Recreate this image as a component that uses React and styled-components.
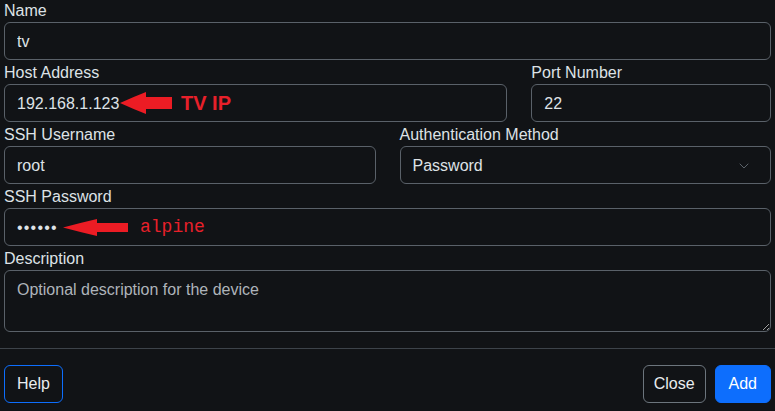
import React from 'react';
import styled, { createGlobalStyle } from 'styled-components';
import { ChevronDown } from 'lucide-react';

const GlobalStyle = createGlobalStyle`
    body {
        margin: 0;
        background: #111316;
        color: #dee2e6;
        font-family: "Segoe UI", "Liberation Sans", Arial, sans-serif;
        font-size: 16px;
    }
`;

const Form = styled.form`
    padding: 0 4px;
    margin-top: -2px;
`;

const Row = styled.div`
    display: flex;
    margin: 0 -12px;
`;

const Col = styled.div`
    flex: 0 0 ${p => (p.span / 12) * 100}%;
    padding: 0 12px;
    box-sizing: border-box;
    min-width: 0;
`;

const Label = styled.label`
    display: block;
    line-height: 26px;
    height: 24px;
`;

const Field = styled.div`
    position: relative;
`;

const Input = styled.input`
    display: block;
    width: 100%;
    box-sizing: border-box;
    height: 38px;
    padding: 7px 12px 5px;
    font: inherit;
    line-height: 24px;
    letter-spacing: ${p => (p.type === 'password' ? '1.2px' : 'normal')};
    color: #dee2e6;
    background: #111316;
    border: 1px solid #5a6169;
    border-radius: 6px;
    outline: none;
`;

const TextArea = styled.textarea`
    display: block;
    width: 100%;
    box-sizing: border-box;
    height: 62px;
    padding: 7px 12px 5px;
    font: inherit;
    line-height: 24px;
    color: #dee2e6;
    background: #111316;
    border: 1px solid #5a6169;
    border-radius: 6px;
    outline: none;
    &::placeholder {
        color: #aeb4ba;
    }
`;

const Select = styled.div`
    display: flex;
    align-items: center;
    justify-content: space-between;
    height: 38px;
    box-sizing: border-box;
    padding: 7px 18px 5px 12px;
    border: 1px solid #5a6169;
    border-radius: 6px;
    line-height: 24px;
    color: #dee2e6;
`;

const Note = styled.div`
    position: absolute;
    left: ${p => p.left}px;
    top: 0;
    height: 38px;
    display: flex;
    align-items: center;
    gap: ${p => p.gap}px;
    pointer-events: none;
`;

const NoteText = styled.span`
    color: #e8202a;
    font-family: ${p => (p.mono ? '"Liberation Mono", "Courier New", monospace' : '"Liberation Sans", Arial, sans-serif')};
    font-weight: ${p => (p.mono ? 400 : 700)};
    font-size: ${p => (p.mono ? 18 : 20)}px;
    line-height: 1;
`;

const Divider = styled.hr`
    border: 0;
    border-top: 1px solid #3d434a;
    margin: 16px -4px 0;
`;

const Footer = styled.div`
    display: flex;
    align-items: center;
    gap: 9px;
    padding: 16px 0 9px;
`;

const Button = styled.button`
    height: 38px;
    padding: 0 ${p => p.pad}px;
    font: inherit;
    border-radius: 6px;
    cursor: pointer;
    color: ${p => (p.variant === 'primary' ? '#ffffff' : '#e9ecef')};
    background: ${p => (p.variant === 'primary' ? '#0d6efd' : 'transparent')};
    border: 1px solid ${p => (p.variant === 'secondary' ? '#6c757d' : '#0d6efd')};
    margin-right: ${p => (p.push ? 'auto' : '0')};
`;

function Arrow({ width, height, head }) {
    const mid = height / 2;
    const shaft = height * 0.27;
    return (
        <svg width={width} height={height} viewBox={`0 0 ${width} ${height}`}>
            <path
                d={`M0 ${mid} Q${head * 0.5} ${mid - shaft} ${head} 0 L${head} ${mid - shaft} L${width} ${mid - shaft} L${width} ${mid + shaft} L${head} ${mid + shaft} L${head} ${height} Q${head * 0.5} ${mid + shaft} 0 ${mid} Z`}
                fill="#ec1c24"
            />
        </svg>
    );
}

export default function App() {
    return (
        <>
            <GlobalStyle />
            <Form>
                <Label htmlFor="name">Name</Label>
                <Input id="name" defaultValue="tv" />
                <Row>
                    <Col span={8}>
                        <Label htmlFor="host">Host Address</Label>
                        <Field>
                            <Input id="host" defaultValue="192.168.1.123" />
                            <Note left={116} gap={9}>
                                <Arrow width={52} height={22} head={26} />
                                <NoteText>TV IP</NoteText>
                            </Note>
                        </Field>
                    </Col>
                    <Col span={4}>
                        <Label htmlFor="port">Port Number</Label>
                        <Input id="port" defaultValue="22" />
                    </Col>
                </Row>
                <Row>
                    <Col span={6}>
                        <Label htmlFor="user">SSH Username</Label>
                        <Input id="user" defaultValue="root" />
                    </Col>
                    <Col span={6}>
                        <Label>Authentication Method</Label>
                        <Select>
                            <span>Password</span>
                            <ChevronDown size={16} color="#5c636a" strokeWidth={1.5} />
                        </Select>
                    </Col>
                </Row>
                <Label htmlFor="pass">SSH Password</Label>
                <Field>
                    <Input id="pass" type="password" defaultValue="alpine" />
                    <Note left={59} gap={12}>
                        <Arrow width={65} height={17} head={34} />
                        <NoteText mono>alpine</NoteText>
                    </Note>
                </Field>
                <Label htmlFor="desc">Description</Label>
                <TextArea id="desc" rows={2} placeholder="Optional description for the device" />
                <Divider />
                <Footer>
                    <Button type="button" pad={12} push>Help</Button>
                    <Button type="button" pad={10} variant="secondary">Close</Button>
                    <Button type="button" pad={13} variant="primary">Add</Button>
                </Footer>
            </Form>
        </>
    );
}
